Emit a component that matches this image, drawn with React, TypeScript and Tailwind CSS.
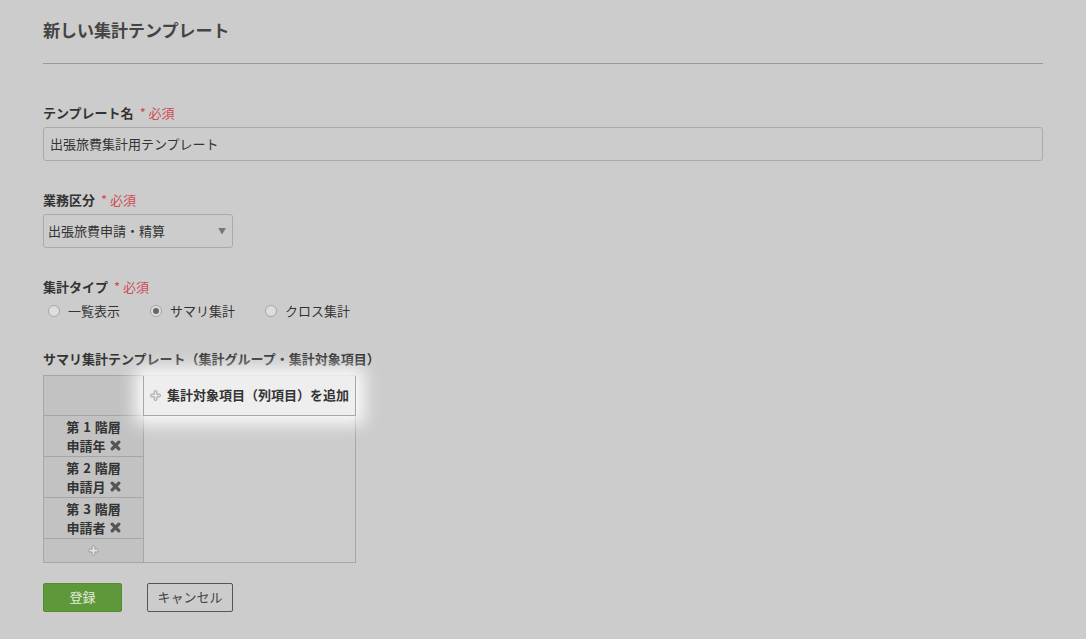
import React from 'react';

const FONT = { fontFamily: '"Noto Sans CJK JP", "Liberation Sans", sans-serif' };

function PlusIcon({ className = '' }: { className?: string }): React.ReactElement {
  return (
    <svg viewBox="0 0 12 12" className={className} aria-hidden>
      <path
        d="M4.5 1.5 Q4.5 0.8 5.2 0.8 H6.8 Q7.5 0.8 7.5 1.5 V4.5 H10.5 Q11.2 4.5 11.2 5.2 V6.8 Q11.2 7.5 10.5 7.5 H7.5 V10.5 Q7.5 11.2 6.8 11.2 H5.2 Q4.5 11.2 4.5 10.5 V7.5 H1.5 Q0.8 7.5 0.8 6.8 V5.2 Q0.8 4.5 1.5 4.5 H4.5 Z"
        fill="#e4e4e4"
        stroke="#9a9a9a"
        strokeWidth="1"
      />
    </svg>
  );
}

function CrossIcon(): React.ReactElement {
  return (
    <svg viewBox="0 0 10 10" className="ml-[4px] inline-block h-[11px] w-[11px]" aria-hidden>
      <path d="M2 2 L8 8 M8 2 L2 8" stroke="#555" strokeWidth="3" strokeLinecap="round" />
    </svg>
  );
}

function Label({ text }: { text: string }): React.ReactElement {
  return (
    <div className="mb-[5px] text-[13px] font-bold leading-[18px] text-[#333]">
      {text}
      <span className="ml-[6px] font-normal text-[#cc4b55]">* 必須</span>
    </div>
  );
}

function Radio({ label, checked = false }: { label: string; checked?: boolean }): React.ReactElement {
  return (
    <label className="flex items-center gap-[8px] text-[13px] text-[#333]">
      <span className="flex h-[12px] w-[12px] items-center justify-center rounded-full border border-[#a5a5a5] bg-[#dedede]">
        {checked && <span className="h-[6px] w-[6px] rounded-full bg-[#666]" />}
      </span>
      {label}
    </label>
  );
}

const levels = [
  { n: 1, name: '申請年' },
  { n: 2, name: '申請月' },
  { n: 3, name: '申請者' },
];

export default function App(): React.ReactElement {
  return (
    <div className="min-h-[639px] bg-[#cccccc] px-[43px] pt-[18px] pb-[26px]" style={FONT}>
      <h1 className="text-[17px] font-bold leading-[24px] text-[#444]">新しい集計テンプレート</h1>
      <hr className="mt-[21px] w-[1000px] border-t border-[#999]" />

      <div className="mt-[40px]">
        <Label text="テンプレート名" />
        <div className="flex h-[34px] w-[1000px] items-center rounded-[3px] border border-[#aaa] px-[6px] text-[13px] text-[#333]">
          出張旅費集計用テンプレート
        </div>
      </div>

      <div className="mt-[30px]">
        <Label text="業務区分" />
        <div className="flex h-[34px] w-[190px] items-center justify-between rounded-[3px] border border-[#aaa] pl-[4px] pr-[6px] text-[13px] text-[#333]">
          出張旅費申請・精算
          <span className="text-[8px] text-[#777]">▼</span>
        </div>
      </div>

      <div className="mt-[30px]">
        <Label text="集計タイプ" />
        <div className="flex gap-[30px] pl-[5px]">
          <Radio label="一覧表示" />
          <Radio label="サマリ集計" checked />
          <Radio label="クロス集計" />
        </div>
      </div>

      <div className="mt-[29px]">
        <div className="mb-[7px] text-[13px] font-bold leading-[18px] text-[#333]">
          サマリ集計テンプレート（集計グループ・集計対象項目）
        </div>
        <div className="grid w-[313px] grid-cols-[100px_212px] grid-rows-[40px_41px_41px_41px_24px] border-t border-l border-[#a6a6a6] text-[13px] font-bold text-[#333]">
          <div className="border-r border-b border-[#a6a6a6] bg-[#c2c2c2]" />
          <div className="relative z-10 -ml-px flex items-center gap-[6px] border-x border-b border-[#a6a6a6] bg-[#eeeeee] px-[6px] shadow-[0_0_16px_8px_rgba(255,255,255,0.92)]">
            <PlusIcon className="h-[11px] w-[11px]" />
            集計対象項目（列項目）を追加
          </div>
          {levels.map((lv, i) => (
            <React.Fragment key={lv.n}>
              <div className="flex flex-col items-center justify-center border-r border-b border-[#a6a6a6] bg-[#c2c2c2] leading-[19px]">
                <div>
                  第<span className="mx-[4px]">{lv.n}</span>階層
                </div>
                <div className="flex items-center">
                  {lv.name}
                  <CrossIcon />
                </div>
              </div>
              {i === 0 && <div className="row-span-4 border-r border-b border-[#a6a6a6] bg-[#cccccc]" />}
            </React.Fragment>
          ))}
          <div className="flex items-center justify-center border-r border-b border-[#a6a6a6] bg-[#c2c2c2]">
            <PlusIcon className="h-[11px] w-[11px]" />
          </div>
        </div>
      </div>

      <div className="mt-[20px] flex gap-[25px]">
        <button className="h-[29px] w-[79px] rounded-[2px] border border-[#548a32] bg-[#5f983b] text-[13px] text-[#e6eedf]">
          登録
        </button>
        <button className="h-[29px] w-[86px] rounded-[2px] border border-[#555] text-[13px] text-[#444]">
          キャンセル
        </button>
      </div>
    </div>
  );
}
